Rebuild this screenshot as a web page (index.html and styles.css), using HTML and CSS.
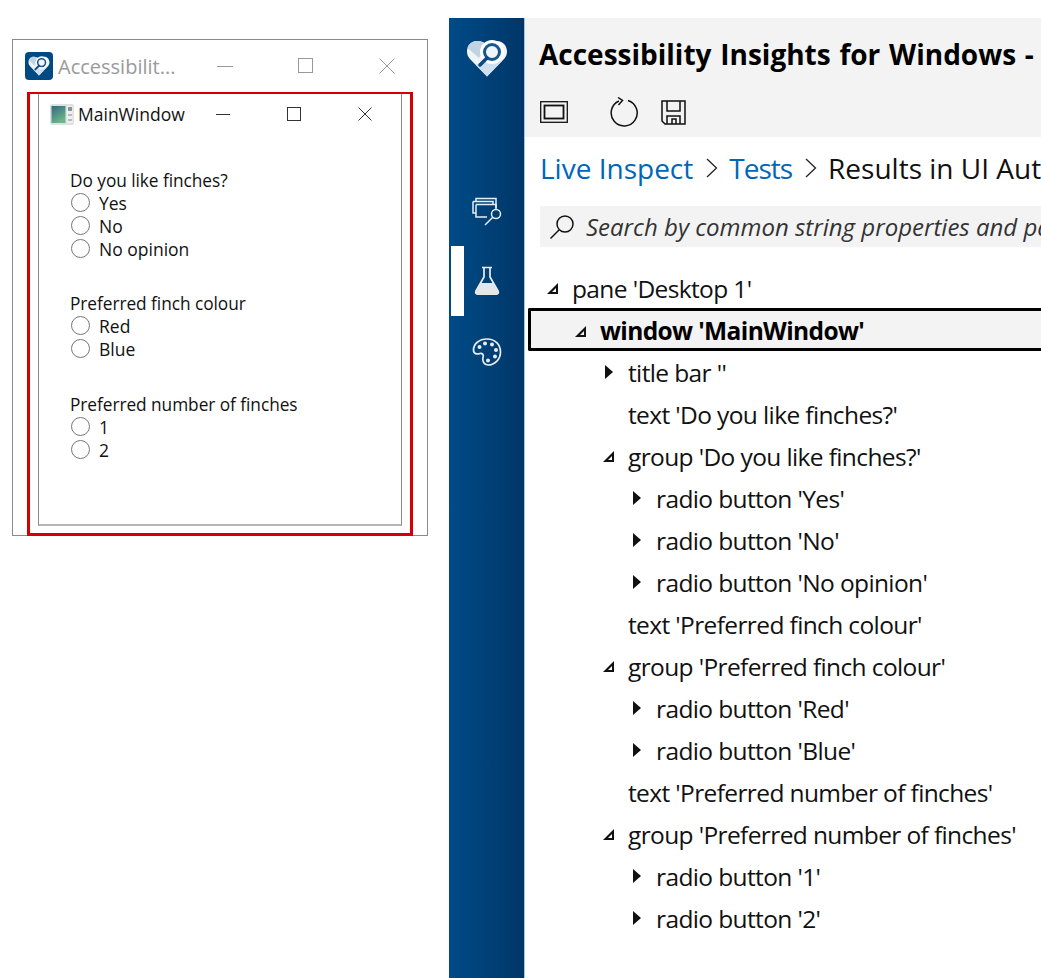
FILE: index.html
```html
<!DOCTYPE html>
<html lang="en">
<head>
<meta charset="utf-8">
<title>Accessibility Insights</title>
<link rel="stylesheet" href="styles.css">
</head>
<body>
<div class="desktop">
  <section class="win-outer">
    <div class="bar-outer">
      <span class="logo-small">
        <svg width="22" height="20" viewBox="0 0 42 37"><path d="M21 36.500L3.500 18.500C-2 12 2 1 11 1C15 1 18.500 2.500 21 5C23.500 2.500 27 1 31 1C40 1 44 12 38.500 18.500Z" fill="#f1f4f7"/><path d="M21 5C18.500 2.500 15 1 11 1C6 1 2.500 4 1.500 8L13 18Z" fill="#c2d3e2"/><path d="M21 36.500L10 25L27 14L36 21Z" fill="#cfe0ee"/><circle cx="26" cy="12" r="12" fill="#fff"/><circle cx="26" cy="12" r="7.500" fill="#eef5fb" stroke="#17578f" stroke-width="3"/><path d="M21 18L14 25" stroke="#0d4a82" stroke-width="3.500" stroke-linecap="round"/></svg>
      </span>
      <span class="outer-title">Accessibilit...</span>
      <div class="ctrls ctrls-outer">
        <svg width="16" height="16" viewBox="0 0 16 16"><path d="M0 8.500H16" stroke="#999"/></svg>
        <svg width="16" height="16" viewBox="0 0 16 16"><rect x=".5" y=".5" width="14" height="14" fill="none" stroke="#999"/></svg>
        <svg width="16" height="16" viewBox="0 0 16 16"><path d="M.5.5L15.500 15.500M15.500.5L.5 15.500" stroke="#999"/></svg>
      </div>
    </div>
  </section>
  <div class="highlight"></div>
  <section class="win-inner">
    <div class="bar-inner">
      <svg class="app-icon" width="24" height="21" viewBox="0 0 24 21"><defs><linearGradient id="ai" x1="0" y1="0" x2=".5" y2="1"><stop offset="0" stop-color="#2f6a80"/><stop offset="1" stop-color="#6db58a"/></linearGradient></defs><rect width="24" height="21" rx="2" fill="#dfe2e2"/><rect x="1.500" y="2" width="14" height="17" fill="url(#ai)"/><rect x="17" y="2" width="5.500" height="17" fill="#eef0f0"/><rect x="18" y="3" width="4" height="4" fill="#8a9696"/><rect x="18" y="10" width="4" height="2" fill="#b4bcbc"/><rect x="18" y="15" width="4" height="2" fill="#b4bcbc"/></svg>
      <span class="inner-title">MainWindow</span>
      <div class="ctrls ctrls-inner">
        <svg width="14" height="14" viewBox="0 0 14 14"><path d="M0 7.500H14" stroke="#333"/></svg>
        <svg width="14" height="14" viewBox="0 0 14 14"><rect x=".5" y=".5" width="13" height="13" fill="none" stroke="#333"/></svg>
        <svg width="14" height="14" viewBox="0 0 14 14"><path d="M.5.5L13.500 13.500M13.500.5L.5 13.500" stroke="#333"/></svg>
      </div>
    </div>
    <div class="form">
      <fieldset class="grp">
        <div class="q">Do you like finches?</div>
        <label class="opt"><span class="radio"></span>Yes</label>
        <label class="opt"><span class="radio"></span>No</label>
        <label class="opt"><span class="radio"></span>No opinion</label>
      </fieldset>
      <fieldset class="grp">
        <div class="q">Preferred finch colour</div>
        <label class="opt"><span class="radio"></span>Red</label>
        <label class="opt"><span class="radio"></span>Blue</label>
      </fieldset>
      <fieldset class="grp">
        <div class="q">Preferred number of finches</div>
        <label class="opt"><span class="radio"></span>1</label>
        <label class="opt"><span class="radio"></span>2</label>
      </fieldset>
    </div>
  </section>

  <section class="app">
    <nav class="nav">
      <svg class="nav-logo" width="42" height="37" viewBox="0 0 42 37"><path d="M21 36.500L3.500 18.500C-2 12 2 1 11 1C15 1 18.500 2.500 21 5C23.500 2.500 27 1 31 1C40 1 44 12 38.500 18.500Z" fill="#f1f4f7"/><path d="M21 5C18.500 2.500 15 1 11 1C6 1 2.500 4 1.500 8L13 18Z" fill="#c2d3e2"/><path d="M21 36.500L10 25L27 14L36 21Z" fill="#cfe0ee"/><circle cx="26" cy="12" r="12" fill="#fff"/><circle cx="26" cy="12" r="7.500" fill="#eef5fb" stroke="#17578f" stroke-width="3"/><path d="M21 18L14 25" stroke="#0d4a82" stroke-width="3.500" stroke-linecap="round"/></svg>
      <svg class="nav-i1" width="30" height="30" viewBox="0 0 30 30" fill="none" stroke="#e8edf2" stroke-width="1.500"><path d="M4 5V2.500H24V12"/><path d="M1 5.500H21V8.500M1 5.500V17H4"/><path d="M4 8.500H24V13M4 8.500V21H15"/><circle cx="24" cy="18" r="4.500"/><path d="M20.800 21.200L13 29"/></svg>
      <div class="nav-active">
        <span class="nav-pill"></span>
        <svg width="26" height="30" viewBox="0 0 26 30"><path d="M8 1.500H18M10 2V11L2 25C1 27 2 28 4 28H22C24 28 25 27 24 25L16 11V2" fill="none" stroke="#eee" stroke-width="1.700"/><path d="M7 17H19L24.500 27C24.500 28 23 29 22 29H4C3 29 1.500 28 1.500 27Z" fill="#e6e6e6"/></svg>
      </div>
      <svg class="nav-i3" width="30" height="30" viewBox="0 0 30 30" fill="none" stroke="#e8edf2" stroke-width="1.700"><path d="M15 2C7 2 1.500 7 1.500 13C1.500 17 5 17.500 8 16.500C10.500 16 12 18 11 20.500C10 24 12 28 16 28C23 28 28.500 22 28.500 15C28.500 7.500 23 2 15 2Z"/><g fill="#e8edf2" stroke="none"><circle cx="7.500" cy="10" r="2"/><circle cx="13" cy="6.500" r="2"/><circle cx="20" cy="7.500" r="2"/><circle cx="24" cy="13" r="2"/><circle cx="23" cy="19.500" r="2"/><circle cx="16" cy="23.500" r="2"/></g></svg>
    </nav>
    <div class="main">
      <header class="head">
        <h1 class="title">Accessibility Insights for Windows -</h1>
        <div class="tools">
          <svg class="t1" width="28" height="22" viewBox="0 0 28 22" fill="none" stroke="#111" stroke-width="1.300"><rect x=".7" y=".7" width="26.600" height="20.600"/><rect x="4.500" y="4.500" width="19" height="13" stroke-width="1.800"/></svg>
          <svg class="t2" width="30" height="30" viewBox="0 0 30 30" fill="none" stroke="#111" stroke-width="1.500"><path d="M10 4A13 13 0 1 0 19 3.500"/><path d="M9 .5L13.500 3.500L9.500 8"/></svg>
          <svg class="t3" width="25" height="25" viewBox="0 0 25 25" fill="none" stroke="#111" stroke-width="1.500"><path d="M1 1H24V24H4L1 21Z"/><path d="M6 1V11H19V1"/><path d="M6 24V16H19V24"/><path d="M11 24V19H15V24"/></svg>
        </div>
      </header>
      <div class="crumbs">
        <span class="link">Live Inspect</span>
        <svg class="chev" width="13" height="20" viewBox="0 0 13 20"><path d="M2 1L11.500 10L2 19" fill="none" stroke="#222" stroke-width="1.300"/></svg>
        <span class="link tests">Tests</span>
        <svg class="chev" width="13" height="20" viewBox="0 0 13 20"><path d="M2 1L11.500 10L2 19" fill="none" stroke="#222" stroke-width="1.300"/></svg>
        <span class="crumb-now">Results in UI Automation</span>
      </div>
      <div class="search">
        <svg class="search-icon" width="26" height="26" viewBox="0 0 26 26" fill="none" stroke="#111" stroke-width="1.500"><circle cx="16" cy="10" r="8"/><path d="M10 16L1.500 24.500"/></svg>
        <span class="search-text">Search by common string properties and patterns</span>
      </div>
      <ul class="tree">
        <li class="row l0"><i class="tw open"></i>pane 'Desktop 1'</li>
        <li class="row l1 sel"><i class="tw open"></i>window 'MainWindow'</li>
        <li class="row l2"><i class="tw closed"></i>title bar ''</li>
        <li class="row l2"><i class="tw"></i>text 'Do you like finches?'</li>
        <li class="row l2"><i class="tw open"></i>group 'Do you like finches?'</li>
        <li class="row l3"><i class="tw closed"></i>radio button 'Yes'</li>
        <li class="row l3"><i class="tw closed"></i>radio button 'No'</li>
        <li class="row l3"><i class="tw closed"></i>radio button 'No opinion'</li>
        <li class="row l2"><i class="tw"></i>text 'Preferred finch colour'</li>
        <li class="row l2"><i class="tw open"></i>group 'Preferred finch colour'</li>
        <li class="row l3"><i class="tw closed"></i>radio button 'Red'</li>
        <li class="row l3"><i class="tw closed"></i>radio button 'Blue'</li>
        <li class="row l2"><i class="tw"></i>text 'Preferred number of finches'</li>
        <li class="row l2"><i class="tw open"></i>group 'Preferred number of finches'</li>
        <li class="row l3"><i class="tw closed"></i>radio button '1'</li>
        <li class="row l3"><i class="tw closed"></i>radio button '2'</li>
      </ul>
    </div>
  </section>
</div>
</body>
</html>
```
FILE: styles.css
```css
* { box-sizing: border-box; }
html, body { margin: 0; padding: 0; background: #fff; }
body { font-family: "Open Sans", "Noto Sans", sans-serif; color: #111; }
.desktop { position: relative; width: 1041px; height: 978px; overflow: hidden; }

.win-outer { position: absolute; left: 12px; top: 39px; width: 416px; height: 497px; border: 1px solid #8a8a8a; background: #fff; }
.bar-outer { display: flex; align-items: center; height: 52px; padding-left: 12px; }
.logo-small { flex: none; display: flex; align-items: center; justify-content: center; width: 28px; height: 28px; border-radius: 4px; background: #004a84; }
.outer-title { margin-left: 5px; font-size: 20px; color: #9a9a9a; }
.ctrls { display: flex; align-items: center; margin-left: auto; }
.ctrls-outer { gap: 65px; padding-right: 32px; }
.highlight { position: absolute; left: 27px; top: 92px; width: 386px; height: 444px; border: 3px solid #d40000; border-top-width: 2px; z-index: 2; }
.win-inner { position: absolute; left: 38px; top: 92px; width: 364px; height: 434px; border: 1px solid #8a8a8a; border-bottom-color: #b5b5b5; border-bottom-width: 2px; background: #fff; z-index: 1; }
.bar-inner { display: flex; align-items: center; height: 42px; padding: 0 29px 0 11px; }
.app-icon { flex: none; }
.inner-title { margin-left: 4px; font-size: 17.500px; color: #111; }
.ctrls-inner { gap: 57px; }

.form { display: flex; flex-direction: column; gap: 32px; padding: 33px 0 0 31px; }
.grp { margin: 0; padding: 0; border: 0; }
.q { height: 23px; padding-top: 2px; line-height: 21px; font-size: 17.300px; letter-spacing: -.05px; }
.grp:nth-child(2) .q { height: 22px; line-height: 20px; }
.opt { display: flex; align-items: center; height: 23px; font-size: 17.500px; }
.radio { flex: none; width: 19px; height: 19px; margin-right: 9px; margin-left: 1px; border: 1.500px solid #777; border-radius: 50%; background: #fff; }

.app { position: absolute; left: 449px; top: 18px; width: 592px; height: 960px; display: flex; background: #fff; }
.nav { flex: none; width: 76px; display: flex; flex-direction: column; align-items: center; background: linear-gradient(90deg, #004b87, #003667); border-right: 1px solid #a9c4dc; }
.nav-logo { margin-top: 22px; flex: none; }
.nav-i1 { margin-top: 119px; margin-left: 1px; flex: none; }
.nav-active { position: relative; flex: none; display: flex; justify-content: center; align-items: center; width: 100%; height: 70px; margin-top: 20px; }
.nav-pill { position: absolute; left: 2px; top: 0; width: 13px; height: 70px; background: #fff; }
.nav-i3 { margin-top: 21px; margin-left: 1px; flex: none; }

.main { flex: 1; min-width: 0; overflow: hidden; }
.head { height: 119px; background: #f3f3f3; padding: 17px 0 0 14px; }
.title { margin: 0; font-size: 28px; line-height: 38px; font-weight: 700; word-spacing: 1.500px; color: #000; white-space: nowrap; }
.tools { display: flex; align-items: center; height: 30px; margin-top: 24px; }
.t1 { margin-left: 1px; flex: none; }
.t2 { margin-left: 41px; flex: none; }
.t3 { margin-left: 22px; flex: none; }

.crumbs { display: flex; align-items: center; height: 61px; padding: 0 0 0 15px; font-size: 28px; white-space: nowrap; }
.link { color: #0067b8; flex: none; }
.tests { letter-spacing: -1px; }
.crumb-now { color: #111; flex: none; }
.chev { margin: 0 11.500px; flex: none; }
.search { display: flex; align-items: center; height: 41px; margin: 8px 0 0 15px; padding-left: 9px; background: #f3f3f3; white-space: nowrap; }
.search-icon { flex: none; }
.search-text { flex: none; margin-left: 11px; font-size: 24px; font-style: italic; color: #333; }

.tree { list-style: none; margin: 20px 0 0; padding: 0; }
.row { display: flex; align-items: center; height: 42px; font-size: 24.500px; letter-spacing: -.62px; white-space: nowrap; color: #111; }
.l0 { padding-left: 22px; }
.l1 { padding-left: 50px; }
.l2 { padding-left: 78px; }
.l3 { padding-left: 106px; }
.sel { margin: -1px 0 0 3px; padding: 2px 0 0 44px; height: 43px; border: 3px solid #000; border-right: 0; border-radius: 2px 0 0 2px; font-weight: 700; background: #f3f3f3; color: #000; }
.tw { flex: none; display: block; width: 25px; height: 14px; position: relative; }
.tw.open::before { content: ""; position: absolute; left: 0; top: 2px; width: 0; height: 0; border-left: 11px solid transparent; border-bottom: 11px solid #111; }
.tw.open::after { content: ""; position: absolute; left: 5px; top: 7px; width: 0; height: 0; border-left: 4px solid transparent; border-bottom: 4px solid #fff; }
.sel .tw.open::after { border-bottom-color: #f3f3f3; }
.tw.closed::before { content: ""; position: absolute; left: 2px; top: 0; width: 0; height: 0; border-top: 7.500px solid transparent; border-bottom: 7.500px solid transparent; border-left: 8px solid #111; }
```
